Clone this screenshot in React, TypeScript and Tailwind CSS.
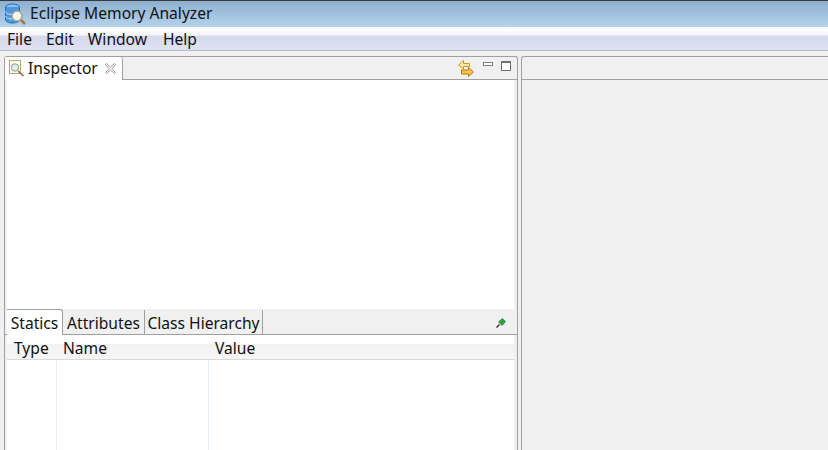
import React from "react";

const font = "font-['Noto_Sans','Open_Sans',sans-serif]";

const AnalyzerIcon = () => (
  <svg width="23" height="24" viewBox="0 0 23 24" fill="none">
    <ellipse cx="9.500" cy="5" rx="7" ry="3" fill="#8fc0ee" stroke="#1d6fc4" />
    <path d="M2.500 5v13c0 1.500 3 3 7 3s7-1.500 7-3V5" fill="#4f97dc" stroke="#1d6fc4" />
    <path d="M2.500 9.500c0 1.500 3 3 7 3s7-1.500 7-3M2.500 14c0 1.500 3 3 7 3" stroke="#d4e9fb" />
    <circle cx="14" cy="14" r="5" fill="#f6f6ec" stroke="#a3a38e" strokeWidth="1.500" />
    <path d="M18 18l4 4" stroke="#a8763a" strokeWidth="2.500" />
  </svg>
);

const InspectorIcon = () => (
  <svg width="17" height="17" viewBox="0 0 17 17" fill="none">
    <rect x="0.500" y="0.500" width="11" height="13" fill="#fbfbf4" stroke="#b9a666" />
    <circle cx="6" cy="7.500" r="3.700" fill="#dfeaf2" stroke="#8a9aa6" />
    <path d="M9 11l5.500 5" stroke="#8c5f4a" strokeWidth="1.500" />
  </svg>
);

const CloseIcon = () => (
  <svg width="11" height="11" viewBox="0 0 11 11" fill="none">
    <path d="M1.500 0.500L5.500 4L9.500 0.500L10.500 1.500L7 5.500L10.500 9.500L9.500 10.500L5.500 7L1.500 10.500L0.500 9.500L4 5.500L0.500 1.500Z" fill="#fff" stroke="#7f7f7f" strokeWidth="0.800" />
  </svg>
);

const SyncIcon = () => (
  <svg width="16" height="17" viewBox="0 0 16 17" fill="none">
    <path d="M5.500 0.500L0.500 5L5.500 9V6.500H11.500V3.500H5.500Z" fill="#fde9a8" stroke="#d8961a" />
    <path d="M10.500 7.500L15.500 12L10.500 16.500V14H3.500V10H10.500Z" fill="#f5c24a" stroke="#b87a10" />
  </svg>
);

const PinIcon = () => (
  <svg width="10" height="10" viewBox="0 0 10 10" fill="none">
    <path d="M5 1.500L6.500 0.500L9.500 3.500L8.500 5L6 7.500L2.500 4Z" fill="#2f9e3f" stroke="#1f7a2e" strokeWidth="0.600" />
    <path d="M3.500 6.500L0.500 9.500" stroke="#223" strokeWidth="1.200" />
  </svg>
);

const columns = [
  { name: "Type", width: "w-[50px]", pad: "pl-[7px]" },
  { name: "Name", width: "w-[152px]", pad: "pl-[6px]" },
  { name: "Value", width: "flex-1", pad: "pl-[6px]" },
];

const App = () => {
  return (
    <div className={`w-[828px] h-[450px] overflow-hidden flex flex-col bg-[#f0f0f0] text-[#111] ${font}`}>
      <div className="h-[27px] shrink-0 flex items-center gap-[4px] pl-[3px] border-t border-[#3a3a3a] bg-gradient-to-b from-[#8eafce] to-[#b6d3ec] text-[15.6px]">
        <AnalyzerIcon />
        <span>Eclipse Memory Analyzer</span>
      </div>

      <div className="h-[24px] shrink-0 flex items-center pl-[7px] pt-[2px] border-b border-[#b9b9cb] bg-[linear-gradient(#ffffff,#f4f6fb_36%,#d5d9ec_38%,#dfe2f1)] text-[15.6px]">
        <span>File</span>
        <span className="ml-[14px]">Edit</span>
        <span className="ml-[14px]">Window</span>
        <span className="ml-[16px]">Help</span>
      </div>

      <div className="flex-1 flex gap-[3px] pl-[4px] pt-[5px] min-h-0">
        <div className="w-[514px] shrink-0 border border-b-0 border-[#a0a0a0] rounded-t-[3px] flex flex-col">
          <div className="h-[23px] shrink-0 flex border-b border-[#a0a0a0]">
            <div className="w-[118px] h-[23px] bg-white border-r border-[#a0a0a0] rounded-tr-[3px] flex items-center pl-[4px] gap-[2px] text-[15.6px]">
              <InspectorIcon />
              <span>Inspector</span>
              <span className="ml-[5px]">
                <CloseIcon />
              </span>
            </div>
            <div className="flex-1 flex items-center justify-end pr-[6px]">
              <SyncIcon />
              <div className="w-[10px] h-[4px] border border-[#808080] bg-white ml-[9px] mb-[9px]" />
              <div className="w-[10px] h-[10px] border border-[#707070] border-t-2 bg-white ml-[8px] mb-[4px]" />
            </div>
          </div>

          <div className="h-[229px] shrink-0 ml-[2px] mr-[3px] bg-white" />

          <div className="flex-1 flex flex-col min-h-0">
            <div className="h-[26px] shrink-0 flex items-end pl-[2px] border-b border-[#a0a0a0] relative">
              <div className="w-[56px] h-[26px] pt-[3px] bg-white border-t border-r border-[#a0a0a0] rounded-tr-[3px] flex items-center justify-center text-[15.6px] -mb-px">
                Statics
              </div>
              <div className="w-[82px] h-[24px] pt-[4px] border-r border-[#a0a0a0] flex items-center justify-center text-[15.6px]">
                Attributes
              </div>
              <div className="w-[118px] h-[24px] pt-[4px] border-r border-[#a0a0a0] flex items-center justify-center text-[15.6px] whitespace-nowrap">
                Class Hierarchy
              </div>
              <div className="ml-auto mr-[11px] mb-[6px]">
                <PinIcon />
              </div>
            </div>

            <div className="flex-1 ml-[2px] mr-[3px] bg-white flex flex-col min-h-0">
              <div className="h-[25px] shrink-0 flex border-b border-[#d9d9d9] bg-[linear-gradient(#ffffff_35%,#f2f2f2_40%,#f7f7f7)] text-[15.6px]">
                {columns.map((col) => (
                  <div key={col.name} className={`${col.width} ${col.pad} pt-[4px] flex items-center`}>
                    {col.name}
                  </div>
                ))}
              </div>
              <div className="flex-1 flex">
                {columns.map((col) => (
                  <div key={col.name} className={`${col.width} ${col.name === "Value" ? "" : "border-r border-[#e3edfb]"}`} />
                ))}
              </div>
            </div>
          </div>
        </div>

        <div className="flex-1 border border-b-0 border-r-0 border-[#a0a0a0] rounded-tl-[3px] flex flex-col">
          <div className="h-[23px] shrink-0 border-b border-[#a0a0a0]" />
          <div className="flex-1" />
        </div>
      </div>
    </div>
  );
};

export default App;
